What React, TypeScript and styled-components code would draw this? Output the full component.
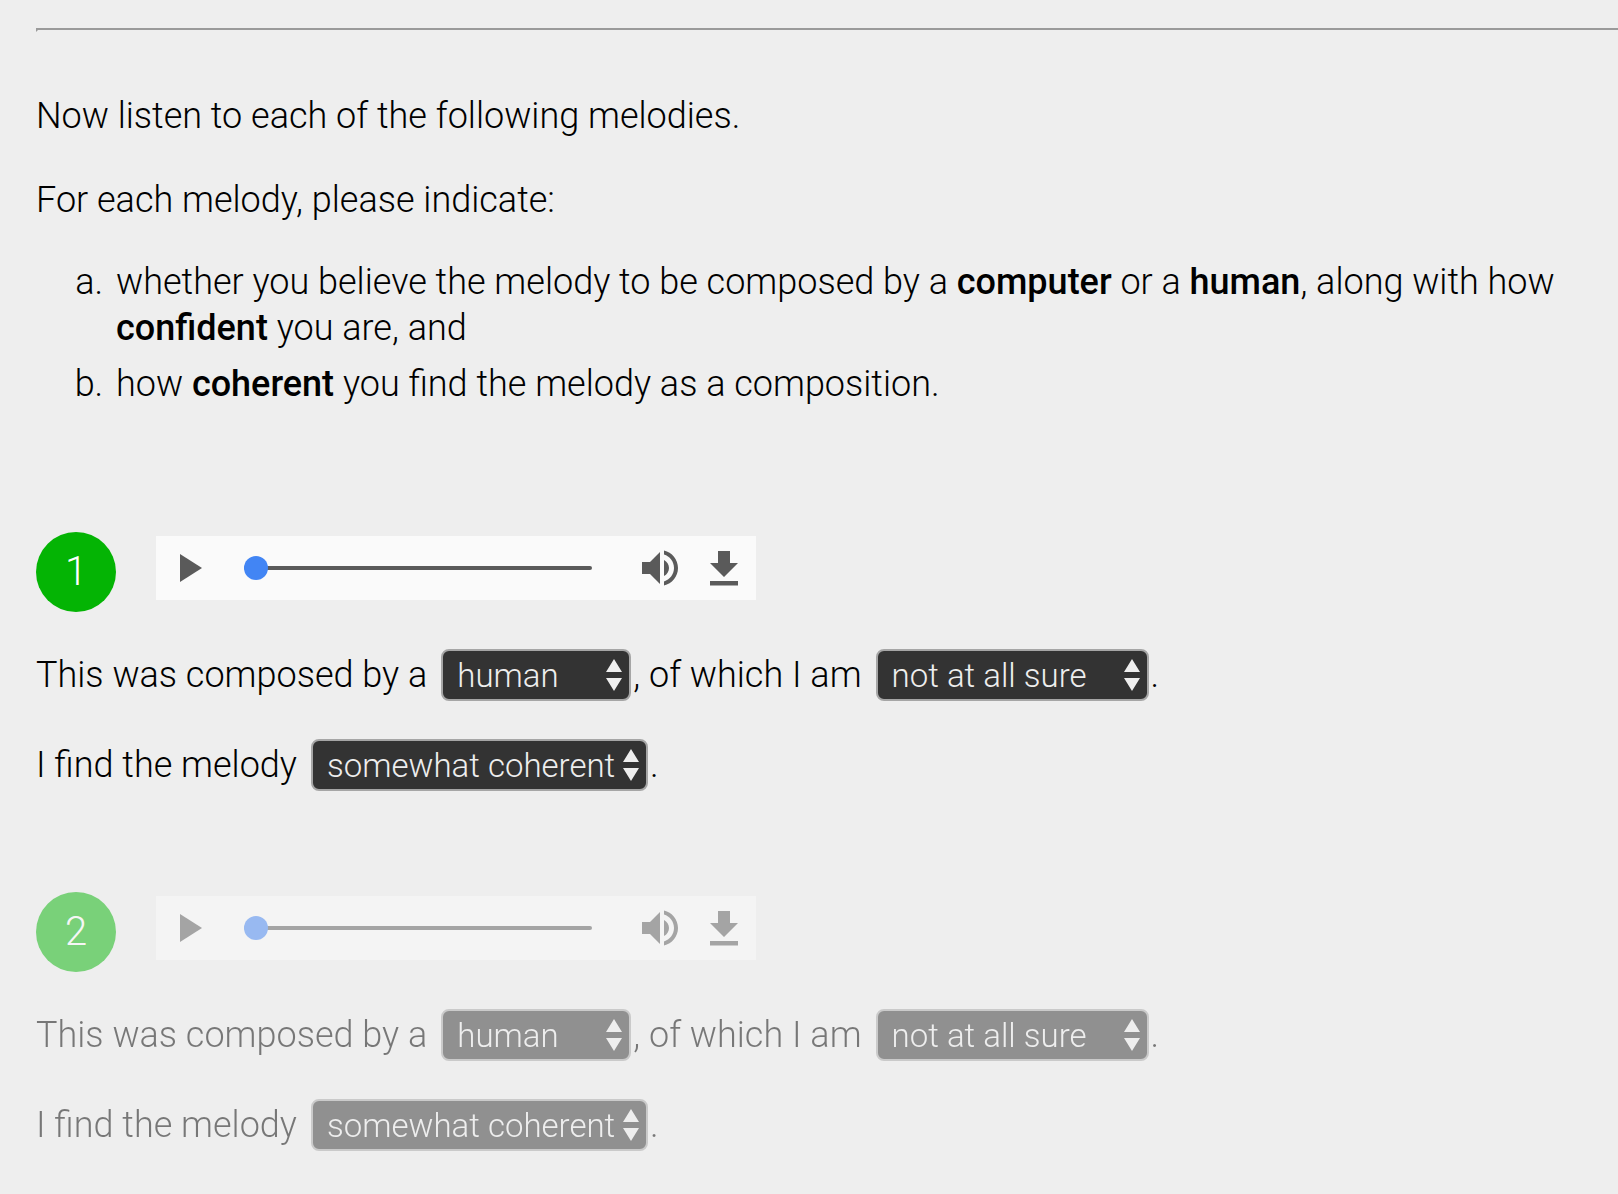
import React, { useState } from "react";
import styled, { createGlobalStyle } from "styled-components";

const GlobalStyle = createGlobalStyle`
  *, *::before, *::after { box-sizing: border-box; }
  body {
    margin: 0;
    background: #eeeeee;
    color: #000000;
    font-family: Roboto, "Liberation Sans", sans-serif;
    font-size: 36px;
    font-weight: 300;
    line-height: 46px;
  }
`;

const Page = styled.main`
  padding: 28px 0 42px 36px;
`;

const Divider = styled.hr`
  height: 4px;
  margin: 0 0 61px;
  border: 2px solid;
  border-color: #9a9a9a #eeeeee #eeeeee #9a9a9a;
  border-right: 0;
`;

const Intro = styled.section`
  padding-right: 36px;
  margin-bottom: 125px;
`;

const Paragraph = styled.p`
  margin: 0 0 38px;
  &:last-of-type { margin-bottom: 36px; }
`;

const Criteria = styled.ol`
  display: flex;
  flex-direction: column;
  gap: 10px;
  margin: 0;
  padding: 0 0 0 76px;
  list-style: lower-alpha;
`;

const Criterion = styled.li`
  padding-left: 4px;
`;

const Strong = styled.strong`
  font-weight: 500;
`;

const Card = styled.section<{ $faded: boolean }>`
  opacity: ${(p) => (p.$faded ? 0.5 : 1)};
  & + & { margin-top: 101px; }
`;

const CardHead = styled.header`
  display: flex;
  gap: 40px;
  margin-bottom: 37px;
`;

const Badge = styled.h2`
  display: flex;
  align-items: center;
  justify-content: center;
  width: 80px;
  height: 80px;
  margin: 0;
  border-radius: 50%;
  background: #04b404;
  color: #ffffff;
  font-size: 40px;
  font-weight: 300;
`;

const Player = styled.div`
  display: flex;
  align-items: center;
  width: 600px;
  height: 64px;
  margin-top: 4px;
  padding: 0 8px;
  background: #fafafa;
`;

const IconButton = styled.button`
  flex: none;
  width: 48px;
  height: 48px;
  padding: 0;
  border: 0;
  background: none;
  color: #5a5a5a;
  cursor: pointer;
  & + & { margin-left: 16px; }
  svg { display: block; width: 48px; height: 48px; fill: currentColor; }
`;

const Seek = styled.input`
  appearance: none;
  flex: 1;
  min-width: 0;
  height: 24px;
  margin: 0 44px 0 32px;
  background: none;
  &::-webkit-slider-runnable-track {
    height: 4px;
    border-radius: 2px;
    background: #5a5a5a;
  }
  &::-webkit-slider-thumb {
    appearance: none;
    width: 24px;
    height: 24px;
    margin-top: -10px;
    border-radius: 50%;
    background: #4285f4;
  }
`;

const Sentence = styled.p`
  display: flex;
  align-items: baseline;
  flex-wrap: wrap;
  margin: 0;
  & + & { margin-top: 38px; }
`;

const SelectBox = styled.span<{ $width: number }>`
  position: relative;
  width: ${(p) => p.$width}px;
  margin: 0 2px 0 14px;
`;

const Select = styled.select`
  appearance: none;
  display: block;
  width: 100%;
  height: 52px;
  padding: 0 0 0 14px;
  border: 2px solid #a6a6a6;
  border-radius: 8px;
  background: #333333;
  color: #eeeeee;
  font-family: inherit;
  font-size: 33px;
  font-weight: 300;
`;

const Arrows = styled.svg`
  position: absolute;
  top: 10px;
  right: 9px;
  width: 16px;
  height: 32px;
  fill: #eeeeee;
  pointer-events: none;
`;

const AfterSelect = styled.span`
  white-space: pre;
`;

type ChoiceProps = { label: string; width: number; initial: string; options: string[] };

function Choice({ label, width, initial, options }: ChoiceProps) {
  const [value, setValue] = useState(initial);
  return (
    <SelectBox $width={width}>
      <Select aria-label={label} value={value} onChange={(e) => setValue(e.target.value)}>
        {options.map((o) => (
          <option key={o}>{o}</option>
        ))}
      </Select>
      <Arrows viewBox="0 0 16 32" aria-hidden="true">
        <path d="M8 0l8 13H0zM8 32l8-13H0z" />
      </Arrows>
    </SelectBox>
  );
}

function AudioPlayer({ name }: { name: string }) {
  return (
    <Player role="group" aria-label={name}>
      <IconButton type="button" aria-label="Play">
        <svg viewBox="0 0 24 24"><path d="M8 5v14l11-7z" /></svg>
      </IconButton>
      <Seek type="range" min={0} max={100} defaultValue={0} aria-label="Position" />
      <IconButton type="button" aria-label="Mute">
        <svg viewBox="0 0 24 24">
          <path d="M3 9v6h4l5 5V4L7 9H3zm13.500 3c0-1.770-1.020-3.290-2.500-4.030v8.050c1.480-.730 2.500-2.250 2.500-4.020zM14 3.230v2.060c2.890.860 5 3.540 5 6.710s-2.110 5.850-5 6.710v2.060c4.010-.910 7-4.490 7-8.770s-2.990-7.860-7-8.770z" />
        </svg>
      </IconButton>
      <IconButton type="button" aria-label="Download">
        <svg viewBox="0 0 24 24"><path d="M19 9.500h-4v-6H9v6H5l7 7 7-7zM5 18.500v2.200h14v-2.200H5z" /></svg>
      </IconButton>
    </Player>
  );
}

function Melody({ number, faded }: { number: number; faded: boolean }) {
  return (
    <Card $faded={faded}>
      <CardHead>
        <Badge>{number}</Badge>
        <AudioPlayer name={`Melody ${number}`} />
      </CardHead>
      <Sentence>
        <span>This was composed by a</span>
        <Choice label="Composer" width={190} initial="human" options={["human", "computer"]} />
        <AfterSelect>, of which I am</AfterSelect>
        <Choice
          label="Confidence"
          width={273}
          initial="not at all sure"
          options={["not at all sure", "somewhat sure", "very sure"]}
        />
        <AfterSelect>.</AfterSelect>
      </Sentence>
      <Sentence>
        <span>I find the melody</span>
        <Choice
          label="Coherence"
          width={337}
          initial="somewhat coherent"
          options={["not coherent", "somewhat coherent", "very coherent"]}
        />
        <AfterSelect>.</AfterSelect>
      </Sentence>
    </Card>
  );
}

export default function App() {
  return (
    <>
      <GlobalStyle />
      <Page>
        <Divider />
        <Intro>
          <Paragraph>Now listen to each of the following melodies.</Paragraph>
          <Paragraph>For each melody, please indicate:</Paragraph>
          <Criteria>
            <Criterion>
              whether you believe the melody to be composed by a <Strong>computer</Strong> or a{" "}
              <Strong>human</Strong>, along with how <Strong>confident</Strong> you are, and
            </Criterion>
            <Criterion>
              how <Strong>coherent</Strong> you find the melody as a composition.
            </Criterion>
          </Criteria>
        </Intro>
        <Melody number={1} faded={false} />
        <Melody number={2} faded />
      </Page>
    </>
  );
}
